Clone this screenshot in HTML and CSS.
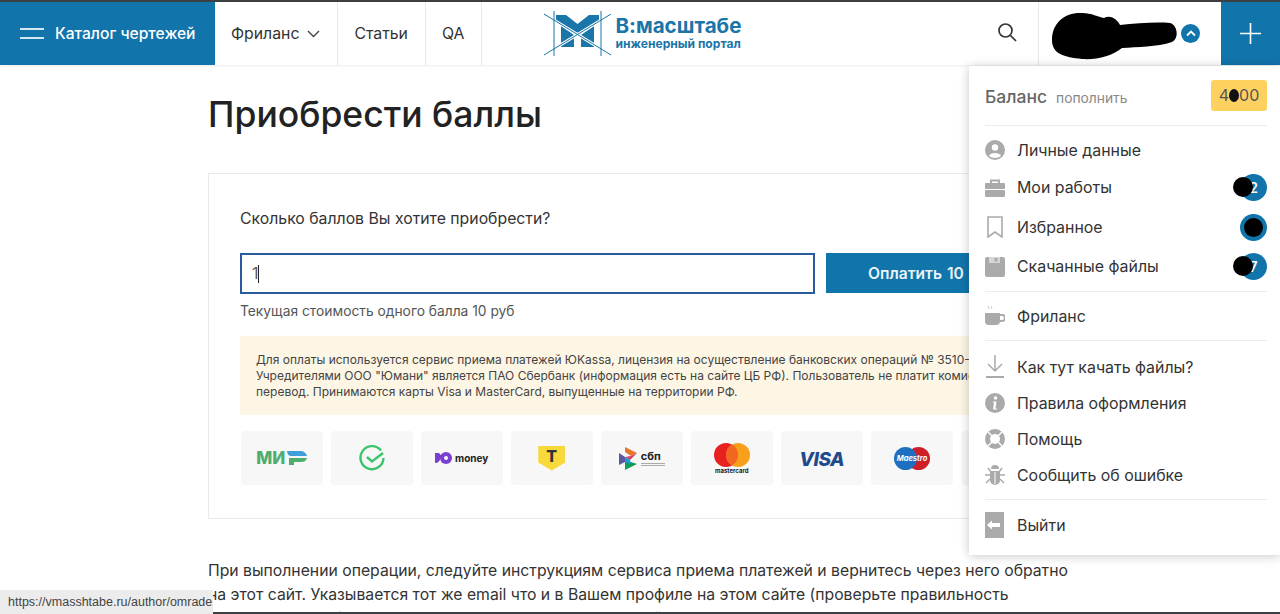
FILE: index.html
```html
<!DOCTYPE html>
<html lang="ru">
<head>
  <meta charset="UTF-8" />
  <meta name="viewport" content="width=device-width, initial-scale=1.0"/>
  <title>Приобрести баллы</title>
  <link rel="stylesheet" href="styles.css">
</head>
<body>
  <header class="topbar">
    <a class="catalog">
      <span class="burger"><i></i><i></i></span>
      Каталог чертежей
    </a>
    <nav class="nav">
      <a>Фриланс
        <svg width="13" height="8" viewBox="0 0 13 8"><path d="M1 1l5.5 5.5L12 1" fill="none" stroke="#444" stroke-width="1.4"/></svg>
      </a>
      <a>Статьи</a>
      <a>QA</a>
    </nav>
    <a class="logo">
      <svg width="67" height="45" viewBox="0 0 67 45">
        <path d="M12 4h10l11.5 9L45 4h10v7L33.5 25 12 11z" fill="#1a75a8"/>
        <path d="M17 15l13 9v12H17zM50 15l-13 9v12h13z" fill="#1a75a8"/>
        <path d="M0 3l67 41M67 3L0 44" fill="none" stroke="#fff" stroke-width="3"/>
        <path d="M0 3l67 41M67 3L0 44M10 0v45M57 0v45" fill="none" stroke="#1a75a8"/>
      </svg>
      <span class="logo-text">
        <b>В:масштабе</b>
        <small>инженерный портал</small>
      </span>
    </a>
    <a class="search">
      <svg width="22" height="22" viewBox="0 0 22 22"><circle cx="9.5" cy="9.5" r="6.5" fill="none" stroke="#333" stroke-width="1.7"/><path d="M14.5 14.5l5.5 5.5" stroke="#333" stroke-width="1.7"/></svg>
    </a>
    <div class="user">
      <svg class="scribble" width="125" height="48" viewBox="0 0 125 48"><path d="M0 28C0 10 14 0 30 1c10 0 16 4 22 5 6-3 12 0 16 7 17-2 37-3 50-2 8 2 9 16 2 19-15 5-35 5-50 6-10 8-25 12-40 11C12 45 0 42 0 28z" fill="#000"/></svg>
      <span class="user-toggle">
        <svg width="10" height="7" viewBox="0 0 10 7"><path d="M1 5.5l4-4 4 4" fill="none" stroke="#fff" stroke-width="1.8"/></svg>
      </span>
    </div>
    <a class="add">
      <svg width="21" height="21" viewBox="0 0 21 21"><path d="M10.5 0v21M0 10.5h21" stroke="#fff" stroke-width="1.6"/></svg>
    </a>
  </header>

  <main class="content">
    <h1>Приобрести баллы</h1>
    <section class="card">
      <p class="question">Сколько баллов Вы хотите приобрести?</p>
      <div class="pay-row">
        <div class="amount">1<span class="caret"></span></div>
        <button class="pay">Оплатить 10 руб</button>
      </div>
      <p class="price">Текущая стоимость одного балла 10 руб</p>
      <div class="notice">
        <div>Для оплаты используется сервис приема платежей ЮKassa, лицензия на осуществление банковских операций № 3510-К.</div>
        <div>Учредителями ООО "Юмани" является ПАО Сбербанк (информация есть на сайте ЦБ РФ). Пользователь не платит комиссию за</div>
        <div>перевод. Принимаются карты Visa и MasterCard, выпущенные на территории РФ.</div>
      </div>
      <div class="pay-logos">
        <div class="pay-logo">
          <span class="mir">МИ<svg width="21" height="14" viewBox="0 0 21 14"><path d="M1 0h13c4 0 6 2 7 5H5C3 5 1 3 1 0z" fill="#3f9fd8"/><path d="M3 7h18c-1 3-3 4-6 4H8v3H3z" fill="#4fae6e"/></svg></span>
        </div>
        <div class="pay-logo">
          <svg width="26" height="26" viewBox="0 0 26 26"><path d="M22 5.5A11.5 11.5 0 1 0 24.5 13" fill="none" stroke="#3cc46c" stroke-width="2.4"/><path d="M8 12l5 4.5L24 8" fill="none" stroke="#3cc46c" stroke-width="2.4"/></svg>
        </div>
        <div class="pay-logo umoney">
          <svg width="17" height="12" viewBox="0 0 17 12"><path d="M0 1h3c1 0 2 .5 2.5 2H8v3H5.500C5 9 3 11 0 11z" fill="#7a3fd0"/><circle cx="11" cy="6" r="6" fill="#7a3fd0"/><circle cx="11" cy="6" r="2" fill="#f7f7f7"/></svg>
          <b>money</b>
        </div>
        <div class="pay-logo">
          <span class="tbank">Т</span>
        </div>
        <div class="pay-logo sbp">
          <svg width="19" height="23" viewBox="0 0 19 23">
            <path d="M0 6l6 4v5l-6 3z" fill="#5b57a2"/>
            <path d="M6 0l12 6-6 3-6-4z" fill="#e8762d"/>
            <path d="M6 10l6-1 6-3-7 7z" fill="#d23f6a"/>
            <path d="M6 15h6l6 2-12 6z" fill="#0f9d58"/>
            <path d="M6 10l5 3 1 4-6-2z" fill="#1d9ad6"/>
          </svg>
          <span><b>сбп</b><i></i><i></i></span>
        </div>
        <div class="pay-logo mastercard">
          <svg width="36" height="24" viewBox="0 0 36 24"><circle cx="12" cy="12" r="12" fill="#e8201f"/><circle cx="24" cy="12" r="12" fill="#f8a01b"/><path d="M18 1.6a12 12 0 0 1 0 20.8 12 12 0 0 1 0-20.8z" fill="#f26522"/></svg>
          <b>mastercard</b>
        </div>
        <div class="pay-logo"><span class="visa">VISA</span></div>
        <div class="pay-logo">
          <svg width="36" height="23" viewBox="0 0 36 23"><circle cx="24.5" cy="11.5" r="11.5" fill="#cf1f26"/><circle cx="11.5" cy="11.5" r="11.5" fill="#1d6fc0"/><text x="18" y="14" text-anchor="middle" font-family="Inter, sans-serif" font-size="7.5" font-weight="700" font-style="italic" fill="#fff">Maestro</text></svg>
        </div>
        <div class="pay-logo"></div>
      </div>
    </section>
    <p class="text">При выполнении операции, следуйте инструкциям сервиса приема платежей и вернитесь через него обратно на этот сайт. Указывается тот же email что и в Вашем профиле на этом сайте (проверьте правильность указания адреса). После оплаты вы вернетесь на этот сайт и баллы будут начислены на ваш баланс автоматически.</p>
  </main>

  <aside class="menu">
    <div class="balance">
      <span class="balance-label">Баланс</span>
      <span class="balance-link">пополнить</span>
      <span class="balance-value">4<span class="blot"></span>00</span>
    </div>
    <ul class="menu-group first">
      <li><svg class="ico" width="20" height="20" viewBox="0 0 20 20"><circle cx="10" cy="10" r="10" fill="#aaa"/><circle cx="10" cy="7.5" r="3.2" fill="#fff"/><path d="M4 16c1-4 11-4 12 0-3 2.5-9 2.5-12 0z" fill="#fff"/></svg>Личные данные</li>
      <li class="tall"><svg class="ico" width="20" height="18" viewBox="0 0 20 18"><path d="M6 4V1.5h8V4" fill="none" stroke="#aaa" stroke-width="2"/><rect y="4" width="20" height="6" rx="1" fill="#aaa"/><rect y="11" width="20" height="7" rx="1" fill="#aaa"/></svg>Мои работы<span class="count">2<span class="blot-badge"></span></span></li>
      <li class="tall"><svg class="ico" width="20" height="22" viewBox="0 0 20 22"><path d="M3 1h14v20l-7-5-7 5z" fill="none" stroke="#aaa" stroke-width="1.6"/></svg>Избранное<span class="count"><span class="blot-full"></span></span></li>
      <li class="tall"><svg class="ico" width="20" height="20" viewBox="0 0 20 20"><rect width="20" height="20" rx="2" fill="#aaa"/><rect x="4" width="11" height="6" fill="#d6d6d6"/><rect x="9.5" y="1" width="3" height="3.5" fill="#aaa"/></svg>Скачанные файлы<span class="count">7<span class="blot-badge"></span></span></li>
    </ul>
    <ul class="menu-group">
      <li><svg class="ico" width="20" height="20" viewBox="0 0 20 20"><path d="M3 0l1 3M6 0l1 3" stroke="#bbb" stroke-width=".8"/><path d="M0 7h15v8a4 4 0 0 1-4 4H4a4 4 0 0 1-4-4z" fill="#aaa"/><path d="M15 9h2a2.5 2.5 0 0 1 0 6h-2" fill="none" stroke="#aaa" stroke-width="2"/></svg>Фриланс</li>
    </ul>
    <ul class="menu-group help">
      <li><svg class="ico" width="20" height="24" viewBox="0 0 20 24"><path d="M10 0v15M3 9l7 7 7-7" fill="none" stroke="#aaa" stroke-width="1.5"/><rect x="1" y="21" width="18" height="2" fill="#aaa"/></svg>Как тут качать файлы?</li>
      <li><svg class="ico" width="20" height="20" viewBox="0 0 20 20"><circle cx="10" cy="10" r="10" fill="#aaa"/><circle cx="10.5" cy="5" r="1.7" fill="#fff"/><path d="M8 8.5h3.5l-1 7H12v1H8l1-7H8z" fill="#fff"/></svg>Правила оформления</li>
      <li><svg class="ico" width="20" height="20" viewBox="0 0 20 20"><circle cx="10" cy="10" r="7.5" fill="none" stroke="#aaa" stroke-width="5"/><path d="M3 3l4 4M17 3l-4 4M3 17l4-4M17 17l-4-4" stroke="#fff" stroke-width="1.5"/></svg>Помощь</li>
      <li><svg class="ico" width="20" height="20" viewBox="0 0 20 20"><path d="M6 4a4 4 0 0 1 8 0z" fill="#aaa"/><path d="M5 6h10v9a5 5 0 0 1-10 0z" fill="#aaa"/><path d="M3 3l3 4M17 3l-3 4M0 10h5M15 10h5M1 18l4-4M19 18l-4-4" stroke="#aaa" stroke-width="1.5"/><path d="M10 7v12" stroke="#fff"/></svg>Сообщить об ошибке</li>
    </ul>
    <ul class="menu-group last">
      <li><svg class="ico" width="20" height="26" viewBox="0 0 20 26"><rect width="19" height="26" fill="#aaa"/><path d="M2 13l5-4.5V11h8v4H7v2.5z" fill="#fff"/></svg>Выйти</li>
    </ul>
  </aside>

  <div class="window-edge"></div>
  <div class="status">https://vmasshtabe.ru/author/omrade</div>
</body>
</html>
```
FILE: styles.css
```css
html, body {
  margin: 0;
  padding: 0;
  height: 100%;
}
body {
  font-family: Inter, "Noto Sans", sans-serif;
  color: #222;
  background: #fff;
  overflow: hidden;
  position: relative;
}
a {
  color: inherit;
  text-decoration: none;
}

/* top bar */
.topbar {
  display: flex;
  height: 63px;
  border-top: 2px solid #3c4043;
  background: #fff;
  box-shadow: 0 1px 2px rgba(0, 0, 0, 0.08);
}
.catalog {
  width: 215px;
  box-sizing: border-box;
  padding-left: 20px;
  display: flex;
  align-items: center;
  gap: 11px;
  background: #1174ab;
  color: #fff;
  font-size: 15.6px;
  font-weight: 500;
  white-space: nowrap;
}
.burger i {
  display: block;
  width: 24px;
  height: 2px;
  background: #d5e8f2;
}
.burger i + i {
  margin-top: 7px;
}
.nav {
  display: flex;
}
.nav a {
  display: flex;
  align-items: center;
  gap: 8px;
  padding: 0 17px 0 16px;
  font-size: 15.8px;
  color: #333;
  border-right: 1px solid #e8e8e8;
}
.logo {
  margin-left: 62px;
  display: flex;
  align-items: center;
  gap: 4px;
}
.logo-text {
  display: flex;
  flex-direction: column;
  color: #1a75a8;
  margin-top: -3px;
}
.logo-text b {
  font-size: 20.6px;
  line-height: 22px;
  font-weight: 700;
}
.logo-text small {
  font-size: 12.1px;
  line-height: 13px;
  font-weight: 700;
}
.search {
  margin-left: auto;
  width: 62px;
  display: flex;
  align-items: center;
  justify-content: center;
  padding-bottom: 4px;
  box-sizing: border-box;
}
.user {
  width: 183px;
  box-sizing: border-box;
  border-left: 1px solid #e8e8e8;
  padding-left: 13px;
  display: flex;
  align-items: center;
}
.scribble {
  flex: 0 0 125px;
  margin-top: 5px;
}
.user-toggle {
  width: 19px;
  height: 19px;
  margin-left: 4px;
  border-radius: 50%;
  background: #1174ab;
  display: flex;
  align-items: center;
  justify-content: center;
}
.add {
  width: 59px;
  display: flex;
  align-items: center;
  justify-content: center;
  background: #1174ab;
}

/* main column */
.content {
  width: 864px;
  margin-left: 208px;
}
h1 {
  margin: 29px 0 38px;
  font-size: 35.5px;
  line-height: 41px;
  font-weight: 500;
  color: #222;
}
.card {
  border: 1px solid #e9e9e9;
  padding: 33px 31px;
  height: 346px;
  box-sizing: border-box;
}
.question {
  margin: 0 0 22px;
  font-size: 15.8px;
  line-height: 24px;
  color: #333;
}
.pay-row {
  display: flex;
  gap: 11px;
}
.amount {
  width: 575px;
  height: 41px;
  box-sizing: border-box;
  border: 2px solid #2a5b9c;
  padding: 0 10px;
  font-size: 15.8px;
  color: #555;
  display: flex;
  align-items: center;
}
.caret {
  width: 1px;
  height: 18px;
  background: #222;
}
.pay {
  flex: 1;
  height: 40px;
  border: none;
  background: #1174ab;
  color: #eaf3f8;
  font-family: inherit;
  font-size: 15.6px;
  font-weight: 600;
  word-spacing: 1px;
  text-align: left;
  padding-left: 42px;
  white-space: nowrap;
}
.price {
  margin: 7px 0 15px;
  font-size: 13.8px;
  line-height: 20px;
  color: #555;
}
.notice {
  height: 79px;
  box-sizing: border-box;
  padding: 16px;
  background: #fdf6e5;
  font-size: 12px;
  line-height: 16px;
  color: #444;
  white-space: nowrap;
  overflow: hidden;
}
.pay-logos {
  display: flex;
  gap: 8.5px;
  margin-top: 16px;
  margin-left: 1px;
}
.pay-logo {
  flex: 0 0 81.5px;
  height: 54px;
  border-radius: 4px;
  background: #f7f7f7;
  display: flex;
  align-items: center;
  justify-content: center;
  gap: 3px;
}
.mir {
  display: flex;
  align-items: center;
  gap: 1px;
  font-size: 17px;
  font-weight: 800;
  color: #4fae6e;
}
.umoney b {
  font-size: 10px;
  font-weight: 700;
  color: #222;
}
.tbank {
  width: 27px;
  height: 25px;
  box-sizing: border-box;
  background: #f7d93b;
  clip-path: polygon(0 0, 100% 0, 100% 68%, 50% 100%, 0 68%);
  text-align: center;
  font-size: 16px;
  line-height: 21px;
  font-weight: 800;
  color: #333;
}
.sbp span {
  display: flex;
  flex-direction: column;
}
.sbp b {
  font-size: 11px;
  line-height: 11px;
  color: #222;
}
.sbp i {
  display: block;
  width: 24px;
  height: 1px;
  margin-top: 1px;
  background: #aaa;
}
.mastercard {
  flex-direction: column;
  gap: 0;
}
.mastercard b {
  font-size: 6px;
  line-height: 7px;
  color: #222;
}
.visa {
  font-size: 19px;
  line-height: 24px;
  padding-top: 3px;
  font-weight: 800;
  font-style: italic;
  letter-spacing: -0.5px;
  color: #1f4a8c;
}
.text {
  margin: 40px 0 0;
  font-size: 15.75px;
  line-height: 24px;
  color: #333;
}

/* user dropdown, lies over the page */
.menu {
  position: absolute;
  top: 66px;
  left: 969px;
  width: 311px;
  height: 489px;
  box-sizing: border-box;
  padding: 0 13px 0 16px;
  background: #fff;
  box-shadow: 0 1px 10px rgba(0, 0, 0, 0.22);
}
.balance {
  height: 59px;
  display: flex;
  align-items: center;
  gap: 9px;
  border-bottom: 1px solid #ececec;
}
.balance-label {
  font-size: 17.5px;
  font-weight: 500;
  color: #666;
  padding-top: 2px;
}
.balance-link {
  font-size: 13.8px;
  color: #888;
  padding-top: 4px;
}
.balance-value {
  margin-left: auto;
  width: 56px;
  height: 31px;
  border-radius: 3px;
  background: #fdd160;
  text-align: center;
  font-size: 16px;
  line-height: 31px;
  color: #555;
}
.blot {
  display: inline-block;
  width: 10px;
  height: 13px;
  border-radius: 50%;
  background: #111;
  vertical-align: -1px;
}
.menu-group {
  list-style: none;
  margin: 0;
  padding: 6px 0;
  border-bottom: 1px solid #ececec;
}
.menu-group.first {
  padding-bottom: 4.5px;
}
.menu-group.help {
  padding-top: 8px;
}
.menu-group.last {
  padding-top: 7px;
  border-bottom: none;
}
.menu-group li {
  display: flex;
  align-items: center;
  height: 36px;
  font-size: 15.9px;
  color: #333;
  position: relative;
}
.menu-group li.tall {
  height: 39.5px;
}
.ico {
  flex: 0 0 20px;
  margin-right: 12px;
}
.count {
  margin-left: auto;
  width: 27px;
  height: 27px;
  border-radius: 50%;
  background: #1174ab;
  color: #fff;
  font-size: 14px;
  font-weight: 600;
  text-align: center;
  line-height: 27px;
  position: relative;
}
.blot-badge {
  position: absolute;
  left: -7px;
  top: 3px;
  width: 20px;
  height: 20px;
  border-radius: 50%;
  background: #000;
}
.blot-full {
  position: absolute;
  left: 4px;
  top: 4px;
  width: 19px;
  height: 19px;
  border-radius: 50%;
  background: #000;
}

/* browser chrome at the bottom of the shot */
.window-edge {
  position: absolute;
  left: 0;
  right: 0;
  bottom: 0;
  height: 2px;
  background: #3c4043;
}
.status {
  position: absolute;
  left: 0;
  top: 590px;
  height: 24px;
  padding: 0 1px 0 8px;
  background: #ececec;
  font-family: "Liberation Sans", sans-serif;
  font-size: 12.5px;
  line-height: 24px;
  color: #444;
}
```
